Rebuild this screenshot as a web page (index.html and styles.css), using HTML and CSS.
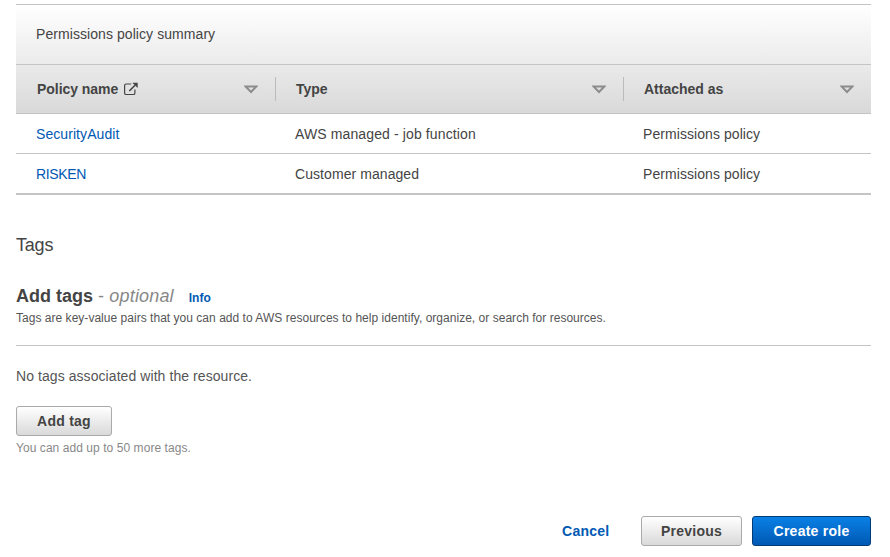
FILE: index.html
```html
<!DOCTYPE html>
<html lang="en">
<head>
<meta charset="utf-8">
<title>Create role</title>
<link rel="stylesheet" href="styles.css">
</head>
<body>
<main class="page">
  <section class="panel">
    <div class="panel-title">Permissions policy summary</div>
    <div class="grid head">
      <div class="th"><span class="name">Policy name</span>
        <svg class="ext" width="16" height="14" viewBox="0 0 16 14"><path d="M8.2 2H3.2Q1.6 2 1.6 3.6V10.9Q1.6 12.5 3.2 12.5H10.3Q11.9 12.5 11.9 10.9V7.5" fill="none" stroke="#444" stroke-width="1.2"/><path d="M6.3 9L12 3.2" stroke="#444" stroke-width="1.6" fill="none"/><path d="M9.3 .7H14.7V6Z" fill="#444"/></svg>
        <svg class="sort" width="14" height="9" viewBox="0 0 14 9"><path d="M1.8 1.6H12.2L7 7Z" fill="none" stroke="#8c8c8c" stroke-width="2"/></svg></div>
      <div class="th"><span>Type</span>
        <svg class="sort" width="14" height="9" viewBox="0 0 14 9"><path d="M1.8 1.6H12.2L7 7Z" fill="none" stroke="#8c8c8c" stroke-width="2"/></svg></div>
      <div class="th"><span>Attached as</span>
        <svg class="sort" width="14" height="9" viewBox="0 0 14 9"><path d="M1.8 1.6H12.2L7 7Z" fill="none" stroke="#8c8c8c" stroke-width="2"/></svg></div>
    </div>
    <div class="grid row"><a class="link">SecurityAudit</a><span class="type">AWS managed - job function</span><span>Permissions policy</span></div>
    <div class="grid row last"><a class="link caps">RISKEN</a><span>Customer managed</span><span>Permissions policy</span></div>
  </section>

  <h2>Tags</h2>
  <div class="tags-head"><h3>Add tags</h3><span class="optional">- <i>optional</i></span><a class="info">Info</a></div>
  <p class="desc">Tags are key-value pairs that you can add to AWS resources to help identify, organize, or search for resources.</p>
  <p class="empty">No tags associated with the resource.</p>
  <button class="btn add">Add tag</button>
  <p class="hint">You can add up to 50 more tags.</p>

  <footer class="actions">
    <a class="cancel">Cancel</a>
    <button class="btn prev">Previous</button>
    <button class="btn primary">Create role</button>
  </footer>
</main>
</body>
</html>
```
FILE: styles.css
```css
* { box-sizing: border-box; }
body { margin: 0; background: #fff; color: #444; font: 14px/20px "Liberation Sans", Arial, sans-serif; }
.page { padding: 4px 19px 0 16px; height: 557px; overflow: hidden; }
h2, h3, p { margin: 0; }
.panel { border-top: 1px solid #c4c4c4; }
.panel-title { height: 60px; padding: 19px 20px 0; border-bottom: 1px solid #c4c4c4; background: linear-gradient(#fff, #ebebeb); letter-spacing: .07px; }
.grid { display: grid; grid-template-columns: 259px 348px 248px; }
.head { height: 49px; align-items: center; background: linear-gradient(#eaeaea, #d9d9d9); border-bottom: 1px solid #c4c4c4; font-weight: bold; }
.th { display: flex; align-items: center; height: 24px; padding: 0 17px 0 20px; border-left: 1px solid #bbb; }
.th:first-child { border-left-color: transparent; }
.name { letter-spacing: -.04px; }
.ext { margin-left: 4.5px; }
.sort { margin-left: auto; }
.row { height: 40px; padding-top: 10px; border-bottom: 1px solid #c4c4c4; letter-spacing: .07px; }
.row > * { padding-left: 20px; }
.row.last { height: 41px; border-bottom-width: 2px; }
.type { letter-spacing: .12px; }
.caps { letter-spacing: -.33px; }
.link, .info, .cancel { color: #0059b3; }
h2 { margin-top: 38px; font-size: 18px; line-height: 24px; font-weight: normal; letter-spacing: -.2px; }
.tags-head { display: flex; align-items: baseline; margin-top: 27px; height: 24px; font-size: 18px; line-height: 24px; }
h3 { font-size: 18px; line-height: 24px; }
.optional { margin-left: 5px; color: #888; letter-spacing: .17px; }
.info { margin-left: 15px; font-size: 12px; font-weight: bold; }
.desc { height: 38px; font-size: 12px; line-height: 20px; color: #555; border-bottom: 1px solid #c4c4c4; letter-spacing: .027px; }
.empty { margin-top: 20px; color: #555; letter-spacing: .07px; }
.btn { height: 30px; padding: 0; border: 1px solid #aaa; border-radius: 3px; background: linear-gradient(#fff, #d9d9d9); color: #444; font: bold 14px/28px "Liberation Sans", Arial, sans-serif; letter-spacing: .25px; }
.add { display: block; width: 96px; margin-top: 20px; }
.hint { margin-top: 2px; font-size: 12px; color: #888; letter-spacing: .06px; }
.actions { display: flex; justify-content: flex-end; align-items: center; margin-top: 58px; }
.cancel { margin-right: 31.5px; font-weight: bold; letter-spacing: .25px; }
.prev { width: 101px; }
.primary { width: 119px; margin-left: 10px; color: #fff; border-color: #003c78; background: linear-gradient(#0a80e6, #0059b3); }
```
